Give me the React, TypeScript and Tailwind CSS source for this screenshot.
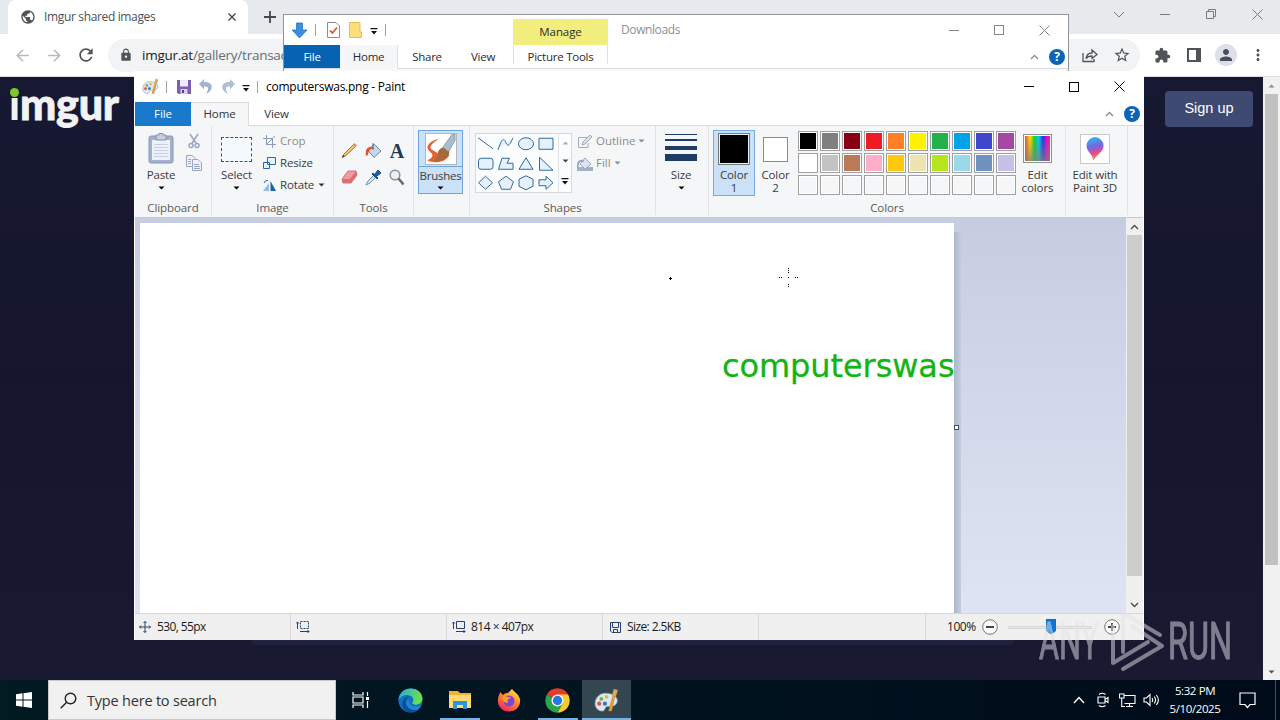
import { ReactNode } from "react";
import {
  MdArrowBack,
  MdArrowForward,
  MdLock,
  MdExtension,
  MdPerson,
  MdMoreVert,
  MdPublic,
  MdRefresh,
  MdStarOutline,
} from "react-icons/md";

const topColors = [
  "#000000",
  "#7f7f7f",
  "#880015",
  "#ed1c24",
  "#ff7f27",
  "#fff200",
  "#22b14c",
  "#00a2e8",
  "#3f48cc",
  "#a349a4",
];
const bottomColors = [
  "#ffffff",
  "#c3c3c3",
  "#b97a57",
  "#ffaec9",
  "#ffc90e",
  "#efe4b0",
  "#b5e61d",
  "#99d9ea",
  "#7092be",
  "#c8bfe7",
];
const emptyColors = Array(10).fill("#f5f6f7");
const palette = [...topColors, ...bottomColors, ...emptyColors];

const shapes: string[] = [
  "M2 3L17 14",
  "M2 15C6 3 8 3 10 8S14 10 17 3",
  "M2.5 9a7.5 6 0 1 0 15 0a7.5 6 0 1 0-15 0",
  "M3 3.5H17V14.500H3Z",
  "M5.500 3.500H14.500Q17 3.500 17 6V12Q17 14.500 14.500 14.500H5Q2.500 14.500 2.500 12V6Q2.500 3.500 5.500 3.500Z",
  "M2.500 14.500L6 3.500H13.500L11 8.500H17V14.500Z",
  "M10 3L17 14.500H3Z",
  "M3.500 2.500V15.500H17Z",
  "M9.500 2.500L16.500 9L9.500 15.500L2.500 9Z",
  "M10 2.500L17.500 8L14.500 15.500H5.500L2.500 8Z",
  "M10 2L17 5.500V12.500L10 16L3 12.500V5.500Z",
  "M3 6H10V2.500L17 9L10 15.500V12H3Z",
];

function Caret({ className = "" }: { className?: string }) {
  return (
    <svg width="7" height="4" viewBox="0 0 7 4" className={className}>
      <path d="M0.500 0.500H6.500L3.500 3.500Z" fill="currentColor" />
    </svg>
  );
}

function QuickMenu() {
  return (
    <svg width="8" height="7" viewBox="0 0 8 7">
      <path d="M0.500 0H7.500V1.200H0.500ZM1 3H7L4 6.500Z" fill="#111" />
    </svg>
  );
}

function HelpIcon() {
  return (
    <span className="flex h-4 w-4 items-center justify-center rounded-full bg-[#0a64b8] text-[12px] leading-none font-bold text-white">
      ?
    </span>
  );
}

function Chevron({ up = false }: { up?: boolean }) {
  return (
    <svg width="9" height="6" viewBox="0 0 9 6" className={up ? "" : "rotate-180"}>
      <path d="M1 5L4.500 1.500L8 5" fill="none" stroke="currentColor" strokeWidth="1.400" />
    </svg>
  );
}

function WindowControls({ color }: { color: string }) {
  return (
    <div className="flex h-full" style={{ color }}>
      <div className="flex w-[46px] items-center justify-center">
        <div className="h-px w-2.5 bg-current" />
      </div>
      <div className="flex w-[44px] items-center justify-center">
        <div className="h-2.5 w-2.5 border border-current" />
      </div>
      <div className="flex w-[47px] items-center justify-center">
        <svg width="11" height="11" viewBox="0 0 11 11">
          <path d="M0.500 0.500L10.500 10.500M10.500 0.500L0.500 10.500" stroke="currentColor" />
        </svg>
      </div>
    </div>
  );
}

function PaletteIcon({ size }: { size: number }) {
  return (
    <svg width={size} height={size} viewBox="0 0 24 24">
      <path
        d="M11 5C4 5 1 11 1 15c0 5 5 8 8 7 2-1 1-3 3-4 3-1 8 1 10-4C24 9 18 5 11 5Z"
        fill="#dce8ed"
        stroke="#8ba4b2"
        strokeWidth="0.800"
      />
      <circle cx="5" cy="15" r="2" fill="#d55252" />
      <circle cx="7" cy="10.500" r="1.800" fill="#69b34c" />
      <circle cx="12" cy="8.500" r="1.800" fill="#e6bb34" />
      <circle cx="10.500" cy="15" r="2" fill="#3577be" />
      <path d="M14 22L18 8L20 8L17 22Z" fill="#e9a13b" stroke="#b9782c" strokeWidth="0.500" />
      <path d="M17 8L19 1L23 2L21 8Z" fill="#d6a75f" />
    </svg>
  );
}

function BrowserWindow() {
  return (
    <div className="absolute inset-x-0 top-0 flex h-[680px] flex-col bg-white">
      <div className="flex h-[34px] bg-[#e7eaed] pl-2">
        <div className="flex w-60 items-center rounded-t-lg bg-white pr-3 pl-3">
          <MdPublic className="h-4 w-4 text-[#50545a]" />
          <span className="ml-2 flex-1 text-[12px] tracking-[-0.350px] text-[#4c5056]">
            Imgur shared images
          </span>
          <svg width="8" height="8" viewBox="0 0 8 8">
            <path d="M0.500 0.500L7.500 7.500M7.500 0.500L0.500 7.500" stroke="#45484c" strokeWidth="1.400" />
          </svg>
        </div>
        <svg width="12" height="12" viewBox="0 0 12 12" className="mt-[11px] ml-4">
          <path d="M6 0V12M0 6H12" stroke="#45484c" strokeWidth="1.800" />
        </svg>
        <div className="ml-auto flex h-7 text-[#777a7e]">
          <div className="flex w-[46px] items-center justify-center">
            <svg width="12" height="7" viewBox="0 0 12 7">
              <path d="M1 1L6 6L11 1" fill="none" stroke="currentColor" />
            </svg>
          </div>
          <div className="flex w-[46px] items-center justify-center">
            <div className="h-px w-2.5 bg-current" />
          </div>
          <div className="flex w-[46px] items-center justify-center">
            <svg width="10" height="10" viewBox="0 0 10 10">
              <path d="M0.500 2.500H7.500V9.500H0.500ZM2.500 2.500V0.500H9.500V7.500H7.500" fill="none" stroke="currentColor" />
            </svg>
          </div>
          <div className="flex w-[46px] items-center justify-center">
            <svg width="11" height="11" viewBox="0 0 11 11">
              <path d="M0.500 0.500L10.500 10.500M10.500 0.500L0.500 10.500" stroke="currentColor" />
            </svg>
          </div>
        </div>
      </div>
      <div className="flex h-[43px] items-center border-b border-[#dcdee1] pl-[6px] text-[#505357]">
        <MdArrowBack className="mx-[6.500px] h-[19px] w-[19px] text-[#b9bbbe]" />
        <MdArrowForward className="mx-[6.500px] h-[19px] w-[19px] text-[#b9bbbe]" />
        <MdRefresh className="mx-[6px] h-5 w-5" />
        <div className="ml-[6px] flex h-[33px] w-[1032px] items-center rounded-full bg-[#f1f3f4] pl-[11px]">
          <MdLock className="h-[14px] w-[14px] text-[#505357]" />
          <span className="ml-[9px] w-[142px] overflow-hidden text-[13.500px] tracking-[-0.250px] text-[#686c71]">
            <span className="text-[#202124]">imgur.at</span>/gallery/transac
          </span>
          <div className="ml-auto flex pr-[2px]">
            <div className="flex w-8 items-center justify-center">
              <svg width="16" height="15" viewBox="0 0 16 15" fill="none" stroke="#505357" strokeWidth="1.300">
                <path d="M1 5V13.500H12V11M4 10.500C4.500 7 6.500 5 10 5V2L15 6.500L10 10.500V8C7.500 8 5.500 8.500 4 10.500Z" />
              </svg>
            </div>
            <div className="flex w-8 items-center justify-center">
              <MdStarOutline className="h-[18px] w-[18px]" />
            </div>
          </div>
        </div>
        <div className="ml-[6px] flex items-center">
          <div className="flex w-8 justify-center">
            <MdExtension className="h-[17px] w-[17px]" />
          </div>
          <div className="flex w-8 justify-center">
            <div className="h-[14px] w-[14px] border-2 border-r-[5px] border-[#505357]" />
          </div>
          <div className="flex w-8 justify-center">
            <div className="flex h-[22px] w-[22px] items-center justify-center rounded-full bg-[#dde0e8]">
              <MdPerson className="h-[18px] w-[18px] text-[#484e5c]" />
            </div>
          </div>
          <div className="flex w-8 justify-center">
            <MdMoreVert className="h-[18px] w-[18px]" />
          </div>
        </div>
      </div>
      <div className="flex flex-1">
        <div className="relative flex flex-1 items-start justify-between bg-linear-to-b from-[#171932] via-[#15162d] to-[#191932]">
          <div
            className="relative ml-[9px] flex text-[43px] leading-[54px] font-black tracking-[-0.200px] text-[#f2f3f4] [-webkit-text-stroke:0.800px_#f2f3f4]"
            style={{ fontFamily: "Lato, sans-serif" }}
          >
            <span className="bg-linear-to-b from-transparent from-[38%] to-[#f2f3f4] to-[38%] bg-clip-text text-transparent [-webkit-text-stroke:0px]">
              i
            </span>
            mgur
            <div className="absolute top-[11px] left-px h-[9px] w-[9px] rounded-full bg-[#7fc62d]" />
          </div>
          <div
            className="mt-[14px] mr-[10px] flex h-9 w-[88px] items-center justify-center rounded bg-[#3e4a72] text-[14.500px] text-white"
            style={{ fontFamily: '"Liberation Sans", sans-serif' }}
          >
            Sign up
          </div>
          <div className="absolute bottom-[35px] left-[250px] h-4 w-[766px] rounded-lg bg-[#202040]" />
        </div>
        <div className="flex w-[17px] flex-col items-center bg-[#f1f1f1] text-[#8b8b8b]">
          <div className="flex h-[17px] items-center">
            <Caret className="rotate-180" />
          </div>
          <div className="h-[471px] w-[13px] bg-[#c1c1c1]" />
          <div className="mt-auto flex h-[17px] items-center text-[#505050]">
            <Caret />
          </div>
        </div>
      </div>
    </div>
  );
}

function ExplorerWindow() {
  return (
    <div className="absolute top-[14px] left-[283px] flex h-[57px] w-[786px] flex-col border-x border-t border-[#8f959a] bg-white text-[#2b2b2b]">
      <div className="flex h-[30px] items-center">
        <div className="flex w-[229px] items-center">
          <svg width="17" height="17" viewBox="0 0 17 17" className="ml-[7px]">
            <path d="M5.500 1H11.500V8H16L8.500 16L1 8H5.500Z" fill="#3a8fdd" stroke="#2b76c0" strokeWidth="0.800" />
          </svg>
          <div className="ml-[7px] h-3 w-px bg-[#a0a0a0]" />
          <svg width="13" height="16" viewBox="0 0 13 16" className="ml-[11px]">
            <path d="M0.500 0.500H9L12.500 4V15.500H0.500Z" fill="#fff" stroke="#8c8c94" />
            <path d="M3 8.500L5.500 11L10 5.500" fill="none" stroke="#e0573a" strokeWidth="1.800" />
          </svg>
          <svg width="13" height="16" viewBox="0 0 13 16" className="ml-[9px]">
            <path d="M0.500 0.500H11V10H12.500V15.500H0.500Z" fill="#fcdf7c" stroke="#e5bf55" />
          </svg>
          <div className="ml-[8px] pt-0.5">
            <QuickMenu />
          </div>
          <div className="ml-[7px] h-3 w-px bg-[#a0a0a0]" />
        </div>
        <div className="flex w-[95px] items-center justify-center self-end bg-[#f1ee7e] text-[11.500px] leading-[26px] tracking-[-0.100px]">
          Manage
        </div>
        <span className="ml-[13px] flex-1 text-[12px] tracking-[-0.400px] text-[#8f8f8f]">Downloads</span>
        <WindowControls color="#858585" />
      </div>
      <div className="flex h-[24px] border-b border-[#d9dadb] text-[11.500px] leading-[24px] tracking-[-0.250px]">
        <div className="w-[56px] bg-[#0563b1] text-center text-white">File</div>
        <div className="-mb-px w-[58px] border-r border-[#dfe0e1] bg-[#f5f6f7] text-center">Home</div>
        <div className="w-[58px] text-center">Share</div>
        <div className="mr-[3px] w-[54px] text-center">View</div>
        <div className="mb-1 w-[95px] border-x border-[#e0e0e0] text-center">Picture Tools</div>
        <div className="ml-auto flex items-center gap-2.5 pr-[3px] text-[#8d8d8d]">
          <Chevron up />
          <HelpIcon />
        </div>
      </div>
      <div className="flex-1 bg-[#f7f8f9]" />
    </div>
  );
}

function RibbonGroup({
  label,
  width,
  children,
}: {
  label?: string;
  width: number;
  children: ReactNode;
}) {
  return (
    <div className="flex flex-col border-r border-[#e2e3e4] text-[#3b3b3b]" style={{ width }}>
      <div className="flex h-[74px] items-start">{children}</div>
      <div className="h-[15px] text-center text-[11.500px] leading-[16px] tracking-[-0.100px] text-[#5a5a5a]">
        {label}
      </div>
    </div>
  );
}

function ClipboardGroup() {
  return (
    <RibbonGroup label="Clipboard" width={77}>
      <div className="ml-[5px] flex w-[42px] flex-col items-center pt-[7px]">
        <svg width="26" height="31" viewBox="0 0 26 31">
          <rect x="1" y="3" width="24" height="27" rx="2" fill="#a4b1cd" stroke="#8797b8" />
          <path d="M4 7H22V27H4Z" fill="#edf1f9" />
          <path d="M8 2H11V0.500H15V2H18V7H8Z" fill="#c9d0dd" stroke="#8592ab" />
          <path d="M6 11.500H20M6 14.500H20M6 17.500H20M6 20.500H20M6 23.500H20" stroke="#c7d0e2" />
        </svg>
        <span className="text-[11.500px] leading-[22px] tracking-[-0.150px]">Paste</span>
        <Caret className="text-black" />
      </div>
      <div className="flex w-[24px] flex-col items-center gap-[6px] pt-[7px]">
        <svg width="12" height="16" viewBox="0 0 12 16" fill="none" stroke="#9aa7c2" strokeWidth="1.500">
          <path d="M2 1L8.500 11M10 1L3.500 11" />
          <circle cx="3" cy="12.500" r="2" />
          <circle cx="9" cy="12.500" r="2" />
        </svg>
        <svg width="16" height="16" viewBox="0 0 16 16" fill="#eef2f9" stroke="#9aa7c2">
          <path d="M0.500 0.500H6L9.500 3.500V11.500H0.500Z" />
          <path d="M6.500 4.500H12L15.500 8V15.500H6.500Z" />
          <path d="M8 9.500H13M8 11.500H14M8 13.500H14M2 4.500H5M2 6.500H5M2 8.500H5" />
        </svg>
      </div>
    </RibbonGroup>
  );
}

function ImageGroup() {
  return (
    <RibbonGroup label="Image" width={122}>
      <div className="ml-[4px] flex w-[41px] flex-col items-center pt-[11px]">
        <div className="h-[25px] w-[31px] border border-dashed border-[#1d5a94] bg-[#f4f9fe]" />
        <span className="mt-[2px] text-[11.500px] leading-[22px] tracking-[-0.150px]">Select</span>
        <Caret className="text-black" />
      </div>
      <div className="ml-[6px] flex flex-col pt-[4px] text-[11.500px] leading-[22px] tracking-[-0.150px]">
        <div className="flex items-center gap-1 text-[#8d8d8d]">
          <svg width="13" height="13" viewBox="0 0 13 13" fill="none" stroke="#8a9dbb" className="w-[13px]">
            <path d="M3.500 0V9.500H13M0 3.500H9.500V13M3.500 9.500L12 1" />
          </svg>
          Crop
        </div>
        <div className="flex items-center gap-1">
          <svg width="13" height="12" viewBox="0 0 13 12" fill="#eaf4ff" stroke="#2468a8">
            <path d="M4.500 0.500H12.500V7.500H4.500ZM0.500 5.500H6.500V11.500H0.500Z" />
          </svg>
          Resize
        </div>
        <div className="flex items-center gap-1">
          <svg width="13" height="13" viewBox="0 0 13 13">
            <path d="M6 4V12H0Z" fill="#93bde2" />
            <path d="M7.500 2V12H13Z" fill="#21619b" />
            <path d="M1 4Q2 1 5 1.500" stroke="#2468a8" fill="none" />
          </svg>
          <span>Rotate</span>
          <Caret className="text-[#333]" />
        </div>
      </div>
    </RibbonGroup>
  );
}

function ToolsGroup() {
  return (
    <RibbonGroup label="Tools" width={80}>
      <div className="ml-[3px] grid grid-cols-3 pt-[11px]">
        <div className="flex h-[27px] w-6 items-center justify-center">
          <svg width="17" height="17" viewBox="0 0 17 17">
            <path d="M1 15.500L3 12L12.500 2.500L14.500 4.500L5 13.500Z" fill="#f3c468" stroke="#9d7140" strokeWidth="0.900" />
            <path d="M12 2.500L14.500 5L16 3.500L13.500 1Z" fill="#d98a80" />
            <path d="M1 15.500L2.200 13L3.700 14.300Z" fill="#333" />
          </svg>
        </div>
        <div className="flex h-[27px] w-6 items-center justify-center">
          <svg width="17" height="17" viewBox="0 0 17 17">
            <path d="M9 2L16 9L9 15.500L3.500 9Z" fill="#c3d8e9" stroke="#7188a0" />
            <path d="M1 14C0 8 2 4 8 5L9 7C4 6 4 9 3 13Z" fill="#dc5435" />
            <path d="M8 8V1" stroke="#667" />
          </svg>
        </div>
        <div
          className="flex h-[27px] w-6 items-center justify-center text-[20px] leading-none font-bold text-[#27374f]"
          style={{ fontFamily: '"Liberation Serif", serif' }}
        >
          A
        </div>
        <div className="flex h-[27px] w-6 items-center justify-center">
          <svg width="17" height="15" viewBox="0 0 17 15">
            <path d="M1 9L7 1H15L16 5L10 13H2Z" fill="#ef9b9b" stroke="#d17575" />
            <path d="M1 9H9L10 13H2ZM9 9L15 1L16 5L10 13Z" fill="#d96f72" />
          </svg>
        </div>
        <div className="flex h-[27px] w-6 items-center justify-center">
          <svg width="17" height="17" viewBox="0 0 17 17">
            <path d="M1 16L3 12L9 6L11 8L5 14Z" fill="#d7e6f2" stroke="#7290ac" />
            <path d="M8 4L13 9L12 10L7 5ZM10 5L13 1L16 4L12 7Z" fill="#1d5fa6" stroke="#1b4f8a" />
          </svg>
        </div>
        <div className="flex h-[27px] w-6 items-center justify-center">
          <svg width="16" height="17" viewBox="0 0 16 17">
            <circle cx="6" cy="6" r="4.800" fill="#e8f1f8" stroke="#8d9297" strokeWidth="1.500" />
            <path d="M9.500 9.500L14.500 15.500" stroke="#64686e" strokeWidth="2.500" />
          </svg>
        </div>
      </div>
    </RibbonGroup>
  );
}

function BrushesGroup() {
  return (
    <RibbonGroup width={56}>
      <div className="mt-[4px] ml-[4px] flex h-[64px] w-[45px] flex-col items-center border border-[#6ea3dc] bg-[#cbe1f8]">
        <svg width="32" height="32" viewBox="0 0 32 32" className="mt-[2px] border border-[#b0b8c0] bg-white">
          <path
            d="M14 5C5 7 0 12 2 16C4 20 9 21 6 25C4 27 2 28 1 28C9 32 22 30 25 22L14 24C14 18 3 18 5 13C7 9 10 8 14 5Z"
            fill="#e8602f"
          />
          <path d="M8 29C13 27 11 21 14 17C18 12 25 14 25 19C25 25 17 30 8 29Z" fill="#a8693a" />
          <path d="M18 14L28 0H31V7L24 19Z" fill="#a9bccb" stroke="#718899" strokeWidth="0.700" />
        </svg>
        <div className="mt-px h-px w-full bg-[#6ea3dc]" />
        <span className="text-[11.500px] leading-[17px] tracking-[-0.250px]">Brushes</span>
        <Caret className="mt-0.5 text-black" />
      </div>
    </RibbonGroup>
  );
}

function ShapesGroup() {
  return (
    <RibbonGroup label="Shapes" width={186}>
      <div className="mt-[7px] ml-[5px] flex h-[60px] w-[97px] border border-[#d5d9de] bg-[#fbfcfe]">
        <div className="grid w-20 grid-cols-4">
          {shapes.map((d) => (
            <svg key={d} width="20" height="19.500" viewBox="0 0 20 18" fill="#e6f1fb" stroke="#34699f">
              <path d={d} />
            </svg>
          ))}
        </div>
        <div className="ml-0.5 flex flex-1 flex-col items-center justify-around border-l border-[#e0e3e7]">
          <Caret className="rotate-180 text-[#b0b0b0]" />
          <Caret className="text-[#444]" />
          <QuickMenu />
        </div>
      </div>
      <div className="ml-[5px] flex flex-col pt-[4px] text-[11.500px] leading-[22px] text-[#8d8d8d]">
        <div className="flex items-center gap-[3px]">
          <svg width="16" height="15" viewBox="0 0 16 15" fill="none" stroke="#a0abc0">
            <path d="M10 3.500H1.500V13.500H11V9" />
            <path d="M5 11L6 8L13 1L15 3L8 10Z" fill="#dce2ec" />
          </svg>
          <span>Outline</span>
          <Caret />
        </div>
        <div className="flex items-center gap-[3px]">
          <svg width="16" height="15" viewBox="0 0 16 15">
            <path d="M0 11H16V15H0Z" fill="#a3b0c8" />
            <path d="M8 2L14 8L8 13L3 8Z" fill="#dde4ef" stroke="#9aa8c2" />
            <path d="M1 11C0 6 3 4 7 5" stroke="#9aa8c2" strokeWidth="2" fill="none" />
          </svg>
          <span>Fill</span>
          <Caret />
        </div>
      </div>
    </RibbonGroup>
  );
}

function ColorsGroup() {
  return (
    <RibbonGroup label="Colors" width={357}>
      <div className="mt-[4px] ml-[4px] flex h-[66px] w-[42px] flex-col items-center border border-[#7aabdf] bg-[#cbe1f8] pt-[2px] text-[11.500px] tracking-[-0.100px]">
        <div className="h-8 w-8 border border-[#777] bg-black outline outline-[#e8f1fb] -outline-offset-2" />
        <span className="mt-[3px] text-center leading-[13px]">
          Color
          <br />1
        </span>
      </div>
      <div className="mt-[4px] flex w-[41px] flex-col items-center pt-[7px] text-[11.500px] tracking-[-0.100px]">
        <div className="h-[25px] w-[25px] border border-[#8a8a8a] bg-white" />
        <span className="mt-[6px] text-center leading-[13px]">
          Color
          <br />2
        </span>
      </div>
      <div className="mt-[5px] ml-[2px] grid w-[218px] grid-cols-10 gap-[2px]">
        {palette.map((color, index) => (
          <div key={index} className="h-5 w-5 border border-[#a0a0a0] bg-white p-px">
            <div className="h-full w-full" style={{ backgroundColor: color }} />
          </div>
        ))}
      </div>
      <div className="flex w-[43px] flex-col items-center pt-[8px] text-[11.500px] tracking-[-0.100px]">
        <div className="h-[29px] w-[29px] border border-[#909090] bg-white p-px">
          <div className="h-full w-full bg-[linear-gradient(to_right,#ff4030,#ffe000_20%,#10d030_38%,#00d0f0_55%,#2030e8_72%,#f000e0_88%,#ff2050)]">
            <div className="h-full w-full bg-linear-to-t from-[#808080c0] to-transparent" />
          </div>
        </div>
        <span className="mt-[5px] text-center leading-[13px]">
          Edit
          <br />
          colors
        </span>
      </div>
    </RibbonGroup>
  );
}

function PaintRibbon() {
  return (
    <div className="flex h-[91px] bg-[#f5f6f7] pb-0.5">
      <ClipboardGroup />
      <ImageGroup />
      <ToolsGroup />
      <BrushesGroup />
      <ShapesGroup />
      <RibbonGroup width={53}>
        <div className="flex w-[50px] flex-col items-center pt-[8px]">
          <div className="h-px w-8 bg-[#1e3c66]" />
          <div className="mt-[4px] h-0.5 w-8 bg-[#1e3c66]" />
          <div className="mt-[5px] h-1 w-8 bg-[#1e3c66]" />
          <div className="mt-[4px] h-[7px] w-8 bg-[#1e3c66]" />
          <span className="mt-[3px] text-[11.500px] leading-[22px] tracking-[-0.150px]">Size</span>
          <Caret className="text-black" />
        </div>
      </RibbonGroup>
      <ColorsGroup />
      <RibbonGroup width={62}>
        <div className="flex w-[58px] flex-col items-center pt-[8px] text-[11.500px]">
          <div className="flex h-[30px] w-[30px] items-center justify-center border border-[#c8c8c8] bg-white">
            <svg width="20" height="24" viewBox="0 0 20 24">
              <defs>
                <linearGradient id="drop" x1="0.300" y1="0" x2="0.500" y2="1">
                  <stop offset="0" stopColor="#35b8ef" />
                  <stop offset="0.400" stopColor="#6d6be2" />
                  <stop offset="0.650" stopColor="#e0489c" />
                  <stop offset="1" stopColor="#ff9c20" />
                </linearGradient>
              </defs>
              <path d="M10 0A9 9 0 0 1 18.500 9C18.500 15 11 18 8 24C9 18 1.500 15 1.500 9A9 9 0 0 1 10 0Z" fill="url(#drop)" />
            </svg>
          </div>
          <span className="mt-[4px] text-center leading-[13px] tracking-[-0.150px] whitespace-nowrap">
            Edit with
            <br />
            Paint 3D
          </span>
        </div>
      </RibbonGroup>
    </div>
  );
}

function PaintCanvas() {
  return (
    <div className="flex h-[396px] border-t border-[#c3cad9]">
      <div className="relative flex flex-1 overflow-hidden bg-linear-to-b from-[#c6cde0] to-[#dde5f4] pt-[5px] pl-[5px]">
        <div className="relative w-[814px] overflow-hidden bg-white">
          <svg width="3" height="3" viewBox="0 0 3 3" className="absolute top-[54px] left-[529px]">
            <path d="M1 0H2V1H3V2H2V3H1V2H0V1H1Z" fill="#000" />
          </svg>
          <svg width="21" height="21" viewBox="0 0 21 21" className="absolute top-[45px] left-[638px]">
            <path
              d="M10.500 0V1M10.500 2V3M10.500 4V5M10.500 16V17M10.500 18V19M10.500 9V10M1 9.500H2M3 9.500H4M17 9.500H18M19 9.500H20"
              stroke="#000"
            />
          </svg>
          <span
            className="absolute top-[123px] left-[582px] text-[32px] leading-[40px] tracking-[-0.080px] text-[#14b414] [-webkit-text-stroke:0.300px_#14b414]"
            style={{ fontFamily: '"DejaVu Sans", sans-serif' }}
          >
            computerswas
          </span>
        </div>
        <div className="mt-[9px] w-[7px] bg-linear-to-r from-[#aab9ca] to-[#c3cddd]" />
        <div className="absolute top-[207px] left-[819px] h-[5px] w-[5px] border border-[#444a60] bg-white" />
      </div>
      <div className="flex w-[17px] flex-col items-center bg-[#f0f0f0] text-[#4a4a4a]">
        <div className="flex h-[17px] items-center">
          <Chevron up />
        </div>
        <div className="h-[341px] w-[15px] bg-[#cdcdcd]" />
        <div className="mt-auto flex h-[17px] items-center">
          <Chevron />
        </div>
      </div>
    </div>
  );
}

function PaintStatusBar() {
  return (
    <div className="flex h-[27px] items-center border-t border-[#d6d6d6] bg-[#f0f0f0] text-[12px] tracking-[-0.600px] text-[#1a1a1a] [&>div]:h-full">
      <div className="flex w-[156px] items-center border-r border-[#d8d8d8] pl-[4px]">
        <svg width="12" height="12" viewBox="0 0 12 12" fill="none" stroke="#24436b">
          <path d="M6 0.500V11.500M0.500 6H11.500M4.500 2L6 0.500L7.500 2M4.500 10L6 11.500L7.500 10M2 4.500L0.500 6L2 7.500M10 4.500L11.500 6L10 7.500" />
        </svg>
        <span className="ml-[6px]">530, 55px</span>
      </div>
      <div className="flex w-[156px] items-center border-r border-[#d8d8d8] pl-[5px]">
        <svg width="14" height="12" viewBox="0 0 14 12" fill="none" stroke="#24436b">
          <path d="M1.500 1V8M0 2.500L1.500 1L3 2.500M4 10.500H13M11.500 9L13 10.500L11.500 12" />
          <path d="M4.500 0.500H12.500V7.500H4.500Z" strokeDasharray="2 1" />
        </svg>
      </div>
      <div className="flex w-[156px] items-center border-r border-[#d8d8d8] pl-[5px]">
        <svg width="14" height="12" viewBox="0 0 14 12" fill="none" stroke="#24436b">
          <path d="M1.500 1V8M0 2.500L1.500 1L3 2.500M4 10.500H13M11.500 9L13 10.500L11.500 12" />
          <path d="M4.500 0.500H12.500V7.500H4.500Z" />
        </svg>
        <span className="ml-[5px] tracking-[-0.500px]">814 × 407px</span>
      </div>
      <div className="flex w-[156px] items-center border-r border-[#d8d8d8] pl-[7px]">
        <svg width="11" height="11" viewBox="0 0 11 11" fill="none" stroke="#24436b">
          <path d="M0.500 0.500H10.500V10.500H2L0.500 9ZM2.500 0.500V5.500H8.500V0.500M3.500 10.500V7.500H7.500V10.500" />
        </svg>
        <span className="ml-[6px]">Size: 2.5KB</span>
      </div>
      <div className="w-[167px] border-r border-[#d8d8d8]" />
      <div className="flex flex-1 items-center pl-[21px]">
        <span className="w-[35px] tracking-[-0.450px]">100%</span>
        <svg width="16" height="16" viewBox="0 0 16 16" fill="#fafafa" stroke="#777">
          <circle cx="8" cy="8" r="7.300" />
          <path d="M4 8H12" stroke="#444" strokeWidth="2" />
        </svg>
        <div className="ml-[10px] flex h-4 w-[84px] items-center">
          <div className="h-[3px] w-[38px] border border-[#d6d6d6] bg-[#e8eaea]" />
          <svg width="10" height="16" viewBox="0 0 10 16">
            <path d="M0 0H10V12L5 15.500L0 12Z" fill="#0b76d2" />
          </svg>
          <div className="h-[3px] flex-1 border border-[#d6d6d6] bg-[#e8eaea]" />
        </div>
        <svg width="16" height="16" viewBox="0 0 16 16" fill="#fafafa" stroke="#777" className="ml-[12px]">
          <circle cx="8" cy="8" r="7.300" />
          <path d="M4 8H12M8 4V12" stroke="#444" strokeWidth="1.800" />
        </svg>
      </div>
    </div>
  );
}

function PaintWindow() {
  return (
    <div className="absolute top-[71px] left-[134px] flex h-[569px] w-[1010px] flex-col border-l border-white bg-white pr-px">
      <div className="flex h-[31px] items-center text-[12px]">
        <div className="flex w-[31px] justify-center">
          <PaletteIcon size={17} />
        </div>
        <div className="h-3 w-px bg-[#a0a0a0]" />
        <div className="ml-[6px] flex w-[22px] justify-center">
          <svg width="14" height="14" viewBox="0 0 14 14">
            <path d="M0 0H14V14H1.500L0 12.500Z" fill="#7c5fb0" />
            <path d="M3 0H11V6.500H3Z" fill="#eeeaf5" />
            <path d="M3.500 9H10.500V14H3.500Z" fill="#d8cdec" />
            <path d="M5 10H7V13H5Z" fill="#56418a" />
          </svg>
        </div>
        <div className="flex w-[22px] justify-center">
          <svg width="14" height="15" viewBox="0 0 14 15">
            <path d="M5 0V3C14 2 16 11 7 15C10 10 10 7 5 7.500V10.500L0 5Z" fill="#a0b5d2" />
          </svg>
        </div>
        <div className="flex w-[22px] justify-center">
          <svg width="14" height="15" viewBox="0 0 14 15">
            <path d="M9 0V3C0 2-2 11 7 15C4 10 4 7 9 7.500V10.500L14 5Z" fill="#b0bfd4" />
          </svg>
        </div>
        <div className="flex w-[14px] justify-center pt-1">
          <QuickMenu />
        </div>
        <div className="ml-[4px] h-3 w-px bg-[#a0a0a0]" />
        <span className="ml-[8px] flex-1 tracking-[-0.250px] text-black">computerswas.png - Paint</span>
        <WindowControls color="#000000" />
      </div>
      <div className="flex h-[24px] border-b border-[#dadbdc] text-[11.500px] leading-[24px] tracking-[-0.100px] text-[#333]">
        <div className="-mb-px w-[56px] bg-[#1979ca] text-center text-white">File</div>
        <div className="-mb-px w-[58px] border-t border-r border-[#dadbdc] bg-[#f5f6f7] text-center leading-[22px]">
          Home
        </div>
        <div className="w-[55px] text-center">View</div>
        <div className="ml-auto flex items-center gap-2.5 pr-[3px] text-[#8d8d8d]">
          <Chevron up />
          <HelpIcon />
        </div>
      </div>
      <PaintRibbon />
      <PaintCanvas />
      <PaintStatusBar />
    </div>
  );
}

function TaskbarApp({
  active = false,
  running = false,
  children,
}: {
  active?: boolean;
  running?: boolean;
  children: ReactNode;
}) {
  return (
    <div className={`flex h-full w-[49px] flex-col items-center ${active ? "bg-[#34464f]" : ""}`}>
      <div className="flex flex-1 items-center pt-0.5">{children}</div>
      <div className={`h-0.5 ${active ? "w-full" : "w-10"} ${running ? "bg-[#76b2e4]" : ""}`} />
    </div>
  );
}

function Taskbar() {
  return (
    <div className="absolute inset-x-0 bottom-0 flex h-10 items-center bg-linear-to-r from-[#021a22] via-[#01131f] to-[#000b1a] text-white">
      <div className="flex w-12 justify-center">
        <svg width="16" height="16" viewBox="0 0 16 16" fill="#fff">
          <path d="M0 2.200L6.500 1.300V7.500H0ZM7.500 1.200L16 0V7.500H7.500ZM0 8.500H6.500V14.700L0 13.800ZM7.500 8.500H16V16L7.500 14.800Z" />
        </svg>
      </div>
      <div className="flex h-full w-[288px] items-center border border-[#c9c9c9] bg-[#f1f1f1] pl-[11px] text-[#333]">
        <svg width="17" height="17" viewBox="0 0 17 17" fill="none" stroke="#222" strokeWidth="1.400">
          <circle cx="10.500" cy="6.500" r="5.300" />
          <path d="M6.700 10.300L0.700 16.300" />
        </svg>
        <span className="ml-[10px] pt-0.5 text-[14.500px] tracking-[-0.200px]">Type here to search</span>
      </div>
      <div className="flex w-[50px] justify-center pr-[2px]">
        <svg width="17" height="16" viewBox="0 0 17 16" fill="none" stroke="#fff" strokeWidth="1.200">
          <path d="M1 0V3H11V0M1 16V13H11V16M1 5H11V11H1ZM15.500 0V4M15.500 9V16" />
          <path d="M14 5H17V8H14Z" fill="#fff" stroke="none" />
        </svg>
      </div>
      <TaskbarApp>
        <svg width="25" height="25" viewBox="0 0 24 24">
          <defs>
            <linearGradient id="edgeTop" x1="0" y1="0" x2="1" y2="0.300">
              <stop offset="0" stopColor="#24a7e0" />
              <stop offset="1" stopColor="#69e14a" />
            </linearGradient>
          </defs>
          <circle cx="12" cy="12" r="11.500" fill="#1170c4" />
          <path d="M0.500 12C1 4 7 0.500 12 0.500C19 0.500 23.500 5 23.500 10C23.500 14 20 16 17 16C14 16 13 14.500 14.500 13C16 9 11 6 7 7C4 7.500 1.500 9 0.500 12Z" fill="url(#edgeTop)" />
          <path d="M8 12C6 18 12 22 19 20.500C13 27 2 22 4.500 13C5.500 10 8 8 11 8C9 9 8.500 10 8 12Z" fill="#0d4d94" />
          <path d="M10.500 12C10 17 16 19.500 22 16.500C21 19 20 20.500 18 21C11 22 7 17 8 12Z" fill="#2087d4" />
        </svg>
      </TaskbarApp>
      <TaskbarApp running>
        <svg width="22" height="20" viewBox="0 0 22 20">
          <path d="M0 1H9L11 3H22V18H0Z" fill="#f2b134" />
          <path d="M0 5H22V18H0Z" fill="#fcda70" />
          <path d="M4 11H18V19H14V15H8V19H4Z" fill="#2f94d8" />
        </svg>
      </TaskbarApp>
      <TaskbarApp>
        <svg width="24" height="24" viewBox="0 0 24 24">
          <defs>
            <linearGradient id="fox" x1="0.800" y1="0" x2="0.200" y2="1">
              <stop offset="0" stopColor="#ffe34d" />
              <stop offset="0.450" stopColor="#ff8a24" />
              <stop offset="1" stopColor="#f01c68" />
            </linearGradient>
          </defs>
          <path d="M3 4L6 7C8 5 10 5 11 5L15 1C17 4 21 5 23 11C24 18 19 23.500 12 23.500C5 23.500 0 18 1 11C1 8 3 6 3 4Z" fill="url(#fox)" />
          <circle cx="12" cy="13" r="5.500" fill="#7946d6" />
          <path d="M5 9C8 7 11 9 14 10C11 11 10 12 11 15C7 15 5 12 5 9Z" fill="#ff9a27" />
        </svg>
      </TaskbarApp>
      <TaskbarApp running>
        <svg width="25" height="25" viewBox="0 0 24 24">
          <path d="M12 12L1.800 6.200A11.700 11.700 0 0 1 22.200 6.200Z" fill="#e53a2e" />
          <path d="M12 12L1.800 6.200A11.700 11.700 0 0 0 12 23.700L17 14.800Z" fill="#2da44b" />
          <path d="M12 6.200H22.200A11.700 11.700 0 0 1 12 23.700L17 14.800Z" fill="#fbcb2d" />
          <circle cx="12" cy="12" r="5.700" fill="#fff" />
          <circle cx="12" cy="12" r="4.500" fill="#2878e4" />
        </svg>
      </TaskbarApp>
      <TaskbarApp active running>
        <PaletteIcon size={25} />
      </TaskbarApp>
      <div className="ml-auto flex items-center">
        <div className="flex w-6 justify-center">
          <svg width="12" height="8" viewBox="0 0 12 8" fill="none" stroke="#fff" strokeWidth="1.400">
            <path d="M1 7L6 1.500L11 7" />
          </svg>
        </div>
        <div className="flex w-6 justify-center">
          <svg width="12" height="16" viewBox="0 0 12 16" fill="none" stroke="#fff" strokeWidth="1.100">
            <path d="M1 5H8V11H1ZM8 7.500L11 5.500V10.500L8 8.500M2 2.500Q5 0 8.500 2.500M2 13.500Q5 16 8.500 13.500" />
          </svg>
        </div>
        <div className="flex w-6 justify-center">
          <svg width="17" height="14" viewBox="0 0 17 14" fill="none" stroke="#fff" strokeWidth="1.100">
            <path d="M5.500 2.500H16V10.500H5.500M10.500 10.500V13.500M7 13.500H14M0.500 1H5V5H0.500ZM2.700 5V13.500H6" />
          </svg>
        </div>
        <div className="flex w-6 justify-center">
          <svg width="17" height="14" viewBox="0 0 17 14" fill="none" stroke="#fff" strokeWidth="1.100">
            <path d="M1 5H3.500L7 1.500V12.500L3.500 9H1ZM9 5Q10.500 7 9 9M11.200 3.500Q14 7 11.200 10.500M13.300 2Q17.500 7 13.300 12" />
          </svg>
        </div>
        <div className="w-[64px] text-center text-[11.500px] leading-[18px] tracking-[-0.400px] whitespace-nowrap">
          5:32 PM
          <br />
          5/10/2025
        </div>
        <div className="ml-[12px] w-[36px]">
          <svg width="17" height="17" viewBox="0 0 17 17" fill="none" stroke="#fff" strokeWidth="1.200">
            <path d="M1 1H16V12.500H11L8.500 15.500L6 12.500H1Z" />
          </svg>
        </div>
        <div className="mr-[4px] h-10 w-px bg-[#46515c]" />
      </div>
    </div>
  );
}

function Watermark() {
  return (
    <svg width="220" height="80" viewBox="0 0 220 80" className="absolute top-[606px] left-[1036px] opacity-50">
      <g fill="#e4e4ea" stroke="#e4e4ea" strokeWidth="1" fontFamily="Roboto, sans-serif" fontSize="51">
        <text x="3" y="53" textLength="60" lengthAdjust="spacingAndGlyphs">
          ANY
        </text>
        <text x="132" y="53" textLength="64" lengthAdjust="spacingAndGlyphs">
          RUN
        </text>
      </g>
      <g fill="none" stroke="#e4e4ea" strokeWidth="4" strokeLinecap="round" strokeLinejoin="round">
        <path d="M124 29L87 7V46" />
        <path d="M77 20V57L112 36" />
        <path d="M87 63L126 40L96 20" />
      </g>
    </svg>
  );
}

export default function App() {
  return (
    <div
      className="relative h-[720px] w-[1280px] overflow-hidden bg-[#17182f]"
      style={{ fontFamily: '"Open Sans", "Noto Sans", sans-serif' }}
    >
      <BrowserWindow />
      <ExplorerWindow />
      <PaintWindow />
      <Taskbar />
      <Watermark />
    </div>
  );
}
